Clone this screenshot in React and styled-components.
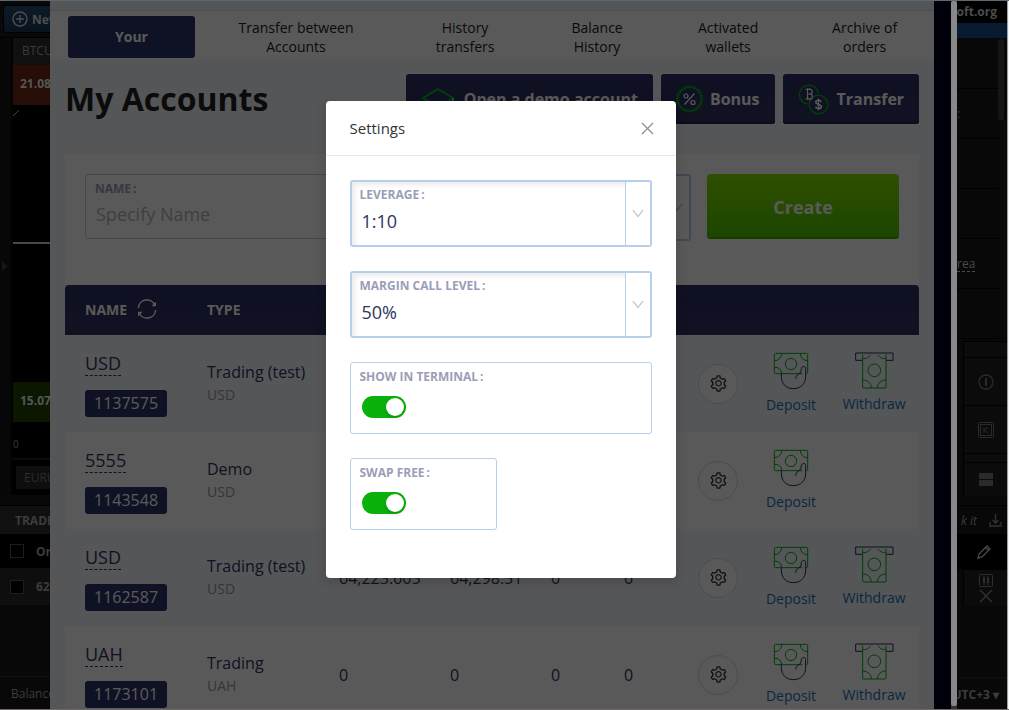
import React, { useState } from "react";
import styled, { createGlobalStyle } from "styled-components";
import { AiOutlineSetting } from "react-icons/ai";

const GlobalStyle = createGlobalStyle`
  * {
    box-sizing: border-box;
  }
  body {
    margin: 0;
    background: #060606;
    font-family: 'Open Sans', 'Liberation Sans', sans-serif;
  }
  button, input, select {
    font-family: inherit;
  }
`

const Screen = styled.div`
  display: flex;
  height: 100vh;
  overflow: hidden;
  border-top: 1px solid #5d6870;
  border-bottom: 1px solid #6e6868;
`

/* trading terminal, left and right of the drawer */

const Terminal = styled.aside`
  flex: 0 0 50px;
  display: flex;
  flex-direction: column;
  overflow: hidden;
  background: #080808;
  color: #3c3c3c;
  font-size: 12px;
  white-space: nowrap;
`

const TopBar = styled.div`
  flex: 0 0 36px;
  padding: 4px 0 4px 3px;
  border-bottom: 1px solid #000;
`

const NewButton = styled.button`
  display: flex;
  align-items: center;
  gap: 4px;
  width: 90px;
  height: 28px;
  padding: 0 8px;
  border: 1px solid #000;
  border-radius: 3px;
  background: linear-gradient(#0d1a27, #091320);
  color: #4e4e4e;
  font-size: 12px;
  font-weight: 700;

  svg {
    flex: none;
  }
`

const Charts = styled.div`
  flex: 0 0 457px;
  display: flex;
`

const Rail = styled.div`
  flex: 0 0 13px;
  display: flex;
  justify-content: flex-end;
  padding: 222px 3px 0 0;
  border-right: 2px solid #020202;
  background: #070707;
`

const ChartColumn = styled.div`
  flex: 0 0 120px;
  display: flex;
  flex-direction: column;
  background: #000;
`

const Symbol = styled.div`
  flex: 0 0 27px;
  padding-left: 9px;
  line-height: 26px;
  background: #101010;
  color: #3c3c3c;
  font-size: 12px;
`

const Price = styled.div`
  flex: 0 0 40px;
  padding-left: 7px;
  line-height: 38px;
  background: ${props => props.bg};
  color: #565656;
  font-size: 12px;
  font-weight: 700;
`

const Gap = styled.div`
  flex: 0 0 ${props => props.h}px;
  border-bottom: ${props => props.line || "0"};
`

const Axis = styled.div`
  flex: 0 0 38px;
  overflow: hidden;
  line-height: 44px;
  border-bottom: 2px solid #0c0c0c;
  font-size: 10px;
`

const SymbolTab = styled.div`
  margin: 4px 0 6px 3px;
  padding-left: 8px;
  height: 23px;
  line-height: 23px;
  background: #0e0e0e;
  color: #2c2c2c;
`

const TradesRow = styled.div`
  flex: 0 0 ${props => props.h}px;
  display: flex;
  align-items: center;
  justify-content: ${props => props.end ? "flex-end" : "flex-start"};
  gap: 12px;
  padding: ${props => props.pad || "0 0 0 10px"};
  background: ${props => props.bg || "transparent"};
  border-top: ${props => props.line || "0"};
  font-weight: ${props => props.bold ? 700 : 400};
  font-style: ${props => props.italic ? "italic" : "normal"};
`

const Tick = styled.input`
  appearance: none;
  flex: 0 0 14px;
  height: 14px;
  margin: 0;
  border: 1px solid #1d1d1d;
  background: #000;
`

const Site = styled.div`
  flex: 0 0 20px;
  display: flex;
  justify-content: flex-end;
  padding-right: 10px;
  line-height: 22px;
  background: #000;
  color: #4c4c4c;
  font-weight: 700;
`

const BlueBar = styled.div`
  flex: 0 0 15px;
  background: #071a30;
`

const News = styled.div`
  flex: 0 0 303px;
  display: flex;
  justify-content: space-between;
  padding: 1px 3px 0 0;
`

const NewsList = styled.div`
  flex: 1;
`

const NewsItem = styled.div`
  display: flex;
  align-items: center;
  height: 50px;
  border-bottom: 1px solid #000;
`

const AreaLink = styled.a`
  color: #4a4a4a;
  border-bottom: 1px dashed #4a4a4a;
  text-decoration: none;
  line-height: 15px;
`

const NewsScroll = styled.div`
  width: 6px;
  height: 81px;
  border-radius: 2px;
  background: #151515;
`

const Tool = styled.div`
  flex: 0 0 ${props => props.h}px;
  display: flex;
  flex-direction: column;
  align-items: center;
  justify-content: center;
  gap: 2px;
  margin-left: 6px;
  border-left: 1px solid #000;
  border-top: 1px solid #000;
  background: #0b0b0b;
`

const ScrollTrack = styled.div`
  flex: 0 0 6px;
  padding-bottom: 3px;
  background: #333;
`

const ScrollThumb = styled.div`
  height: 100%;
  border-radius: 2px;
  background: #888;
`

const WindowEdge = styled.div`
  flex: 0 0 2px;
  background: #f2f5f8;
  border-left: 1px solid #9aa2a8;
`

/* accounts drawer */

const Drawer = styled.main`
  position: relative;
  flex: 1;
  display: flex;
  overflow: hidden;
  background: #000020;
`

const Panel = styled.div`
  flex: 1;
  margin-right: 17px;
  background: #f3f6fc;
`

const TabStrip = styled.div`
  height: 10px;
  background: #eff3f7;
  border-bottom: 1px solid #dbe2e8;
`

const Nav = styled.nav`
  display: grid;
  grid-template-columns: 127fr 202fr 136fr 128fr 134fr 139fr;
  align-items: center;
  height: 48px;
  padding: 3px 0 0 18px;
  background: #fff;
`

const NavLink = styled.a`
  justify-self: center;
  max-width: 130px;
  color: #222;
  font-size: 14px;
  line-height: 19px;
  text-align: center;
  text-decoration: none;
`

const NavActive = styled(NavLink)`
  justify-self: stretch;
  border-radius: 3px;
  background: #2d3368;
  color: #fff;
  font-weight: 700;
  line-height: 42px;
`

const Content = styled.div`
  padding: 15px 15px 0;
`

const TitleRow = styled.div`
  display: flex;
  align-items: center;
  gap: 8px;
  height: 50px;
  margin-bottom: 30px;
`

const Title = styled.h1`
  flex: 1;
  margin: 0;
  color: #222;
  font-size: 32px;
  font-weight: 700;
  line-height: 50px;
`

const ActionButton = styled.button`
  display: flex;
  align-items: center;
  gap: ${props => props.gap}px;
  height: 50px;
  padding: 0 15px;
  border: 0;
  border-radius: 3px;
  background: linear-gradient(#2b3068, #30345e);
  box-shadow: inset 0 -2px 0 #222554;
  color: #fff;
  font-size: 16px;
  font-weight: 700;
`

const CreateForm = styled.form`
  display: grid;
  grid-template-columns: 1fr 1fr 192px;
  gap: 16px;
  height: 131px;
  padding: 20px;
  background: #fff;
`

const Field = styled.div`
  position: relative;
  width: ${props => props.narrow ? "147px" : "auto"};
  height: ${props => props.h || 65}px;
  border: ${props => props.thick ? 2 : 1}px solid #b8cfea;
  border-radius: 3px;
  background: #fff;
  box-shadow: ${props => props.inset ? "inset 3px 3px 5px rgba(0, 0, 0, 0.08)" : "none"};
`

const FieldLabel = styled.label`
  position: absolute;
  top: ${props => props.thick ? 5 : 6}px;
  left: ${props => props.thick ? 8 : 9}px;
  color: #9b9db8;
  font-size: 12px;
  font-weight: 700;
  line-height: 16px;
  pointer-events: none;
`

const Colon = styled.span`
  margin-left: 2px;
`

const TextInput = styled.input`
  width: 100%;
  height: 100%;
  padding: 16px 10px 2px;
  border: 0;
  background: transparent;
  color: #2d3368;
  font-size: 18px;

  &::placeholder {
    color: #b5b5b5;
  }
`

const SelectBox = styled.select`
  appearance: none;
  width: 100%;
  height: 100%;
  padding: 16px 30px 2px 10px;
  border: 0;
  background: transparent;
  color: #2f3463;
  font-size: 18px;
`

const Arrow = styled.span`
  position: absolute;
  top: 0;
  right: 0;
  bottom: 0;
  display: flex;
  align-items: center;
  justify-content: center;
  width: 25px;
  border-left: 1px solid #b8cfea;
  background: #fff;
  pointer-events: none;
`

const CreateButton = styled.button`
  height: 65px;
  padding: 1px 0 0;
  border: 0;
  border-radius: 4px;
  background: linear-gradient(#86e000, #50c800);
  box-shadow: inset 0 -2px 0 #47ad00;
  color: #fff;
  font-size: 18px;
  font-weight: 700;
`

const Table = styled.table`
  width: 100%;
  table-layout: fixed;
  border-collapse: collapse;
`

const HeadRow = styled.tr`
  height: 50px;
  background: linear-gradient(#2b3068, #30345e);
`

const Th = styled.th`
  padding: 0 0 2px 20px;
  color: #fff;
  font-size: 14px;
  font-weight: 700;
  text-align: left;
`

const ThInner = styled.span`
  display: flex;
  align-items: center;
  gap: 10px;
`

const TableFrame = styled.div`
  overflow: hidden;
  border-radius: 4px 4px 0 0;
`

const Row = styled.tr`
  height: 97px;
  background: #fff;

  &:nth-child(odd) {
    background: #f3f6fc;
  }
`

const Td = styled.td`
  padding: 0 0 0 20px;
  color: #2f3463;
  font-size: 16px;
  line-height: 22px;
`

const IconTd = styled.td`
  padding: ${props => props.pad || "0"};
  text-align: center;
`

const AccountName = styled.a`
  display: table;
  border-bottom: 1px dashed #2f3463;
  color: #2f3463;
  font-size: 18px;
  line-height: 24px;
  text-decoration: none;
`

const AccountId = styled.span`
  display: inline-block;
  margin-top: 14px;
  padding: 0 9px;
  border-radius: 3px;
  background: #2d3268;
  color: #fff;
  font-size: 16px;
  line-height: 27px;
`

const Currency = styled.div`
  padding-top: 1px;
  color: #999;
  font-size: 14px;
`

const GearButton = styled.button`
  display: inline-flex;
  align-items: center;
  justify-content: center;
  width: 40px;
  height: 40px;
  padding: 0;
  border: 1px solid #d9d9d9;
  border-radius: 50%;
  background: #fff;
  color: #333;
`

const MoneyLink = styled.a`
  display: inline-flex;
  flex-direction: column;
  align-items: center;
  gap: 5px;
  padding-bottom: 1px;
  color: #1873b8;
  font-size: 14px;
  line-height: 20px;
  text-decoration: none;
`

/* settings dialog */

const Mask = styled.div`
  position: absolute;
  inset: 0;
  display: flex;
  align-items: flex-start;
  justify-content: center;
  padding-top: 100px;
  background: rgba(0, 0, 0, 0.65);
`

const Dialog = styled.section`
  width: 350px;
  border-radius: 4px;
  background: #fff;
  box-shadow: 0 4px 12px rgba(0, 0, 0, 0.15);
`

const DialogHead = styled.header`
  display: flex;
  align-items: center;
  justify-content: space-between;
  height: 55px;
  padding: 0 22px 0 24px;
  border-bottom: 1px solid #e8e8e8;
`

const DialogTitle = styled.h2`
  margin: 0;
  color: #333;
  font-size: 15px;
  font-weight: 400;
`

const CloseButton = styled.button`
  display: flex;
  padding: 1px 0 0;
  border: 0;
  background: none;
`

const DialogBody = styled.div`
  display: flex;
  flex-direction: column;
  gap: 24px;
  padding: 24px 24px 48px;
`

const Switch = styled.input`
  appearance: none;
  position: relative;
  display: block;
  width: 44px;
  height: 22px;
  margin: 33px 0 0 11px;
  border-radius: 11px;
  background: ${props => props.checked ? "#0bb10b" : "#bfbfbf"};
  cursor: pointer;

  &::after {
    content: '';
    position: absolute;
    top: 2px;
    left: ${props => props.checked ? 24 : 2}px;
    width: 18px;
    height: 18px;
    border-radius: 50%;
    background: #fff;
    box-shadow: 0 2px 4px rgba(0, 35, 11, 0.2);
  }
`

const green = "#00b414";

const PlusIcon = () => (
  <svg width="16" height="16" viewBox="0 0 16 16" fill="none" stroke="#4e4e4e" strokeWidth="1.4">
    <circle cx="8" cy="8" r="7" />
    <path d="M8 4v8M4 8h8" />
  </svg>
)

const CapIcon = () => (
  <svg width="34" height="30" viewBox="0 0 34 30" fill="none" stroke={green} strokeWidth="1.8">
    <path d="M17 5 2 14l15 9 15-9z" />
    <path d="M8 18v6c4 4 14 4 18 0v-6" />
    <path d="M32 14v9" stroke="#fff" strokeWidth="1" />
  </svg>
)

// zigzag ring of the bonus badge
const teeth = Array.from({ length: 48 }, (_, i) => {
  const r = i % 2 ? 11.2 : 13;
  const a = (i * Math.PI) / 24;
  return `${(13.5 + r * Math.cos(a)).toFixed(2)},${(14 + r * Math.sin(a)).toFixed(2)}`;
}).join(" ");

const BonusIcon = () => (
  <svg width="28" height="28" viewBox="0 0 28 28" fill="none">
    <polygon points={teeth} stroke={green} strokeWidth="1.3" />
    <g stroke="#fff" strokeWidth="1.2">
      <path d="M18.5 8.5 8.500 19.500" />
      <circle cx="10" cy="11" r="2" />
      <circle cx="17" cy="17.5" r="2" />
    </g>
  </svg>
)

const TransferIcon = () => (
  <svg width="31" height="31" viewBox="0 0 31 31" fill="none">
    <path d="M20.3 9.5A9.500 9.500 0 1 0 10.400 20.200" stroke={green} strokeWidth="1.3" />
    <circle cx="20.5" cy="20.5" r="9.3" stroke={green} strokeWidth="1.3" />
    <g stroke="#fff" strokeWidth="1.1">
      <path d="M7.5 5.5h4.5a2.2 2.2 0 0 1 0 4.500H9.500M12 10a2.400 2.400 0 0 1 0 4.800H7.500M9.500 5.500v9.300M9.800 4v1.500M12 4v1.500M9.800 14.800v1.500M12 14.800v1.500" />
      <path d="M23.3 18c-.5-1.300-1.600-1.700-2.800-1.700-1.500 0-2.700.8-2.700 2 0 2.700 5.600 1.500 5.600 4.200 0 1.300-1.300 2.100-2.900 2.100-1.400 0-2.600-.6-3-1.900M20.500 14.800v11.400" strokeWidth="1.5" />
    </g>
  </svg>
)

const RefreshIcon = () => (
  <svg width="20" height="20" viewBox="0 0 60 60" fill="none" stroke="#fff" strokeWidth="4.5">
    <path d="M4 27a26 26 0 0 1 50-8" />
    <path d="M56 33a26 26 0 0 1-50 8" />
    <path d="M57 8v14H43zM3 52V38h14z" fill="#fff" stroke="none" />
  </svg>
)

const DepositIcon = () => (
  <svg width="36" height="38" viewBox="0 0 108 114" fill="none" strokeWidth="3">
    <g stroke={green}>
      <path d="M88 65H8a4 4 0 0 1-4-4V8a4 4 0 0 1 4-4h92a4 4 0 0 1 4 4v53a4 4 0 0 1-4 4" />
      <circle cx="54" cy="36" r="17" />
      <path d="M26 4A21 21 0 0 1 4 26M82 4a21 21 0 0 0 22 22M4 46a19 19 0 0 1 22 19" />
    </g>
    <path d="M25 65v8c0 22 14 37 36 37s37-15 37-37V50c0-9-11-9-13 0-1 6-1 10-4 13-6 4-13 7-13 17" stroke="#2d2a60" />
  </svg>
)

const WithdrawIcon = () => (
  <svg width="39" height="37" viewBox="0 0 117 111" fill="none" strokeWidth="3">
    <path d="M23 25H2V3h112v22H93" stroke="#2d2a60" />
    <g stroke={green}>
      <path d="M23 8v97a3 3 0 0 0 3 3h64a3 3 0 0 0 3-3V8" />
      <circle cx="58" cy="55" r="19" />
      <path d="M23 20c10 1 20-4 24-12M93 20c-10 1-20-4-24-12M23 84a24 24 0 0 1 26 24M93 84a24 24 0 0 0-26 24" />
    </g>
  </svg>
)

const ChevronIcon = () => (
  <svg width="12" height="9" viewBox="0 0 12 9" fill="none" stroke="#bfbfbf" strokeWidth="1.2">
    <path d="m1 1 5 6.5L11 1" />
  </svg>
)

const CloseIcon = ({ size = 13, color = "#8c8c8c" }) => (
  <svg width={size} height={size} viewBox="0 0 13 13" fill="none" stroke={color} strokeWidth="1.2">
    <path d="M1 1l11 11M12 1 1 12" />
  </svg>
)

const InfoIcon = () => (
  <svg width="16" height="16" viewBox="0 0 16 16" fill="none" stroke="#2a2a2a" strokeWidth="1.3">
    <circle cx="8" cy="8" r="7" />
    <path d="M8 4v8" strokeWidth="2" />
  </svg>
)

const KeyIcon = () => (
  <svg width="16" height="16" viewBox="0 0 16 16" fill="none" stroke="#2a2a2a">
    <rect x="0.5" y="0.5" width="15" height="15" rx="1" />
    <rect x="2.5" y="2.5" width="11" height="11" />
    <path d="M6 5v6M10 5 6.5 8l3.5 3" />
  </svg>
)

const SplitIcon = () => (
  <svg width="14" height="13" viewBox="0 0 14 13" fill="#2b2b2b">
    <path d="M0 0h14v6H0zM0 7h14v6H0z" />
  </svg>
)

const DownloadIcon = () => (
  <svg width="13" height="13" viewBox="0 0 13 13" fill="none" stroke="#333" strokeWidth="1.3">
    <path d="M1 8v4h11V8M6.5 0v8.5M3.5 6l3 3 3-3" />
  </svg>
)

const PencilIcon = () => (
  <svg width="14" height="14" viewBox="0 0 14 14" fill="none" stroke="#4a4a4a" strokeWidth="1.3">
    <path d="m1 13 1-4 8-8 3 3-8 8zM8.5 2.5l3 3" />
  </svg>
)

const CandlesIcon = () => (
  <svg width="14" height="13" viewBox="0 0 14 13" fill="none" stroke="#2e2e2e">
    <rect x="0.5" y="0.5" width="13" height="12" rx="1" />
    <path d="M5 4v5M9 4v5" strokeWidth="2" />
    <path d="M5 2v9M9 2v9" />
  </svg>
)

const accounts = [
  { id: "1137575", name: "USD", type: "Trading (test)", currency: "USD", values: ["", "", "", ""], withdraw: true },
  { id: "1143548", name: "5555", type: "Demo", currency: "USD", values: ["", "", "", ""], withdraw: false },
  { id: "1162587", name: "USD", type: "Trading (test)", currency: "USD", values: ["64,223.605", "64,298.51", "0", "0"], withdraw: true },
  { id: "1173101", name: "UAH", type: "Trading", currency: "UAH", values: ["0", "0", "0", "0"], withdraw: true },
];

const columns = [122, 132, 111, 101, 73, 83, 62, 84, 86];

const LeftTerminal = () => (
  <Terminal>
    <TopBar>
      <NewButton><PlusIcon />New</NewButton>
    </TopBar>
    <Charts>
      <Rail>
        <svg width="6" height="12" viewBox="0 0 6 12" fill="#161616"><path d="m0 1 6 5-6 5z" /></svg>
      </Rail>
      <ChartColumn>
        <Symbol>BTCUSD</Symbol>
        <Price bg="#260d05">21.08</Price>
        <Gap h={139} line="2px solid #484848">
          <svg width="40" height="8" viewBox="0 0 40 8" fill="none" stroke="#4d4a00"><path d="M0 6 6 0" /></svg>
        </Gap>
        <Gap h={138} />
        <Price bg="#0c1702">15.07</Price>
        <Axis>0</Axis>
        <Gap h={2} />
        <SymbolTab>EURUSD</SymbolTab>
      </ChartColumn>
    </Charts>
    <Gap h={11} line="1px solid #000" />
    <TradesRow h={28} bg="#101010" bold pad="0 0 0 15px">TRADES</TradesRow>
    <TradesRow h={34} bg="#000" bold><Tick type="checkbox" aria-label="All orders" />Order</TradesRow>
    <TradesRow h={37} bg="#0e0e0e" bold><Tick type="checkbox" aria-label="Order 62" />62</TradesRow>
    <Gap h={71} />
    <TradesRow h={34} line="1px solid #101010" pad="0 0 0 11px">Balance</TradesRow>
  </Terminal>
)

const RightTerminal = () => (
  <Terminal>
    <Site>soft.org</Site>
    <BlueBar />
    <News>
      <NewsList>
        <NewsItem />
        <NewsItem>:</NewsItem>
        <NewsItem />
        <NewsItem />
        <NewsItem><AreaLink href="#area">rea</AreaLink></NewsItem>
        <NewsItem />
      </NewsList>
      <NewsScroll />
    </News>
    <Tool h={16} />
    <Tool h={48}><InfoIcon /></Tool>
    <Tool h={48}><KeyIcon /></Tool>
    <Tool h={9} />
    <Tool h={34}><SplitIcon /></Tool>
    <Gap h={10} line="1px solid #000" />
    <TradesRow h={28} end italic pad="0 5px 0 0">k it<DownloadIcon /></TradesRow>
    <TradesRow h={35} end bg="#000" pad="0 16px 0 0"><PencilIcon /></TradesRow>
    <Tool h={37}>
      <CandlesIcon />
      <CloseIcon size={14} color="#333" />
    </Tool>
    <Gap h={71} />
    <TradesRow h={34} end bold line="1px solid #101010" pad="0 8px 0 0">UTC+3 ▾</TradesRow>
  </Terminal>
)

const AccountRow = ({ account }) => (
  <Row>
    <Td>
      <AccountName href={`#${account.id}`}>{account.name}</AccountName>
      <AccountId>{account.id}</AccountId>
    </Td>
    <Td>
      {account.type}
      <Currency>{account.currency}</Currency>
    </Td>
    {account.values.map((value, i) => <Td key={i}>{value}</Td>)}
    <IconTd>
      <GearButton aria-label="Account settings"><AiOutlineSetting size={19} /></GearButton>
    </IconTd>
    <IconTd>
      <MoneyLink href="#deposit"><DepositIcon />Deposit</MoneyLink>
    </IconTd>
    <IconTd pad="0 4px 0 0">
      {account.withdraw && <MoneyLink href="#withdraw"><WithdrawIcon />Withdraw</MoneyLink>}
    </IconTd>
  </Row>
)

const SelectField = ({ id, label, options }) => (
  <Field h={67} thick inset>
    <FieldLabel htmlFor={id} thick>{label}<Colon>:</Colon></FieldLabel>
    <SelectBox id={id}>
      {options.map(option => <option key={option}>{option}</option>)}
    </SelectBox>
    <Arrow><ChevronIcon /></Arrow>
  </Field>
)

const SwitchField = ({ id, label, narrow }) => {
  const [on, setOn] = useState(true);

  return (
    <Field h={72} narrow={narrow}>
      <FieldLabel htmlFor={id}>{label}<Colon>:</Colon></FieldLabel>
      <Switch id={id} type="checkbox" role="switch" checked={on} onChange={() => setOn(!on)} />
    </Field>
  )
}

const App = () => {
  return (
    <>
      <GlobalStyle />
      <Screen>
        <LeftTerminal />
        <Drawer>
          <Panel>
            <TabStrip />
            <Nav>
              <NavActive href="#your">Your</NavActive>
              <NavLink href="#transfer">Transfer between Accounts</NavLink>
              <NavLink href="#history">History<br />transfers</NavLink>
              <NavLink href="#balance">Balance<br />History</NavLink>
              <NavLink href="#wallets">Activated<br />wallets</NavLink>
              <NavLink href="#archive">Archive of<br />orders</NavLink>
            </Nav>
            <Content>
              <TitleRow>
                <Title>My Accounts</Title>
                <ActionButton gap={9}><CapIcon />Open a demo account</ActionButton>
                <ActionButton gap={6}><BonusIcon />Bonus</ActionButton>
                <ActionButton gap={8}><TransferIcon />Transfer</ActionButton>
              </TitleRow>
              <CreateForm>
                <Field>
                  <FieldLabel htmlFor="name">NAME<Colon>:</Colon></FieldLabel>
                  <TextInput id="name" placeholder="Specify Name" />
                </Field>
                <Field h={67} thick>
                  <SelectBox aria-label="Account type" />
                  <Arrow><ChevronIcon /></Arrow>
                </Field>
                <CreateButton type="button">Create</CreateButton>
              </CreateForm>
              <TableFrame>
                <Table>
                  <colgroup>
                    {columns.map((width, i) => <col key={i} width={width} />)}
                  </colgroup>
                  <thead>
                    <HeadRow>
                      <Th><ThInner>NAME <RefreshIcon /></ThInner></Th>
                      <Th>TYPE</Th>
                      <Th colSpan={7} />
                    </HeadRow>
                  </thead>
                  <tbody>
                    {accounts.map(account => <AccountRow key={account.id} account={account} />)}
                  </tbody>
                </Table>
              </TableFrame>
            </Content>
          </Panel>
          <Mask>
            <Dialog role="dialog" aria-labelledby="settings-title">
              <DialogHead>
                <DialogTitle id="settings-title">Settings</DialogTitle>
                <CloseButton aria-label="Close"><CloseIcon /></CloseButton>
              </DialogHead>
              <DialogBody>
                <SelectField id="leverage" label="LEVERAGE" options={["1:10"]} />
                <SelectField id="margin" label="MARGIN CALL LEVEL" options={["50%"]} />
                <SwitchField id="terminal" label="SHOW IN TERMINAL" />
                <SwitchField id="swap" label="SWAP FREE" narrow />
              </DialogBody>
            </Dialog>
          </Mask>
        </Drawer>
        <ScrollTrack><ScrollThumb /></ScrollTrack>
        <RightTerminal />
        <WindowEdge />
      </Screen>
    </>
  );
};

export default App;
